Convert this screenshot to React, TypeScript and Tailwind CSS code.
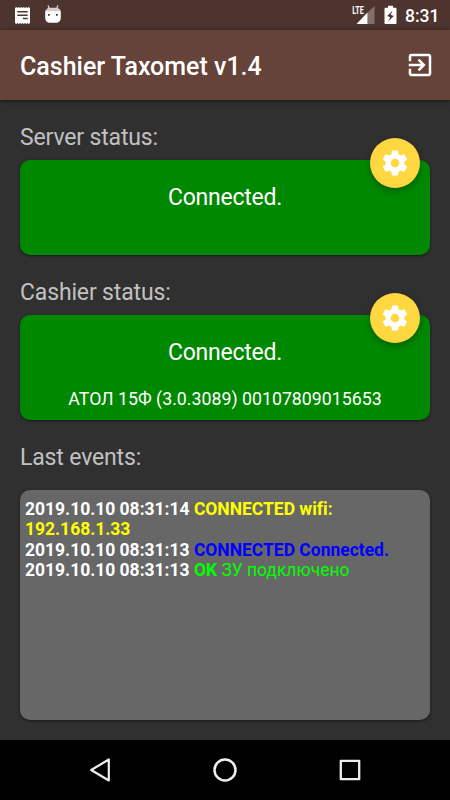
import React from "react";

function StatusBar() {
  return (
    <div className="flex h-[30px] shrink-0 items-center bg-[#4e342e] pl-[15px] pr-[10px]">
      <svg width="15" height="17" viewBox="0 0 15 17" fill="#fff">
        <path
          fillRule="evenodd"
          d="M0 1l1.25-1 1.25 1 1.25-1L5 1l1.25-1L7.5 1l1.25-1L10 1l1.25-1 1.25 1 1.25-1L15 1v15l-1.25 1-1.25-1-1.25 1L10 16l-1.25 1-1.25-1-1.25 1L5 16l-1.25 1-1.25-1-1.25 1L0 16zM2.3 4v1.5h10.4V4zM2.3 7.4v1.5h10.4V7.4zM7.8 10.7v1.5h4.9v-1.5z"
        />
      </svg>
      <svg className="ml-[14px]" width="18" height="20" viewBox="0 0.7 18 20">
        <path d="M4.2 1.5l1.2 3M13.8 1.5l-1.2 3" stroke="#e4dedd" strokeWidth="1.2" strokeLinecap="round" />
        <path d="M1.2 8C1.2 5.2 3.4 3.5 6 3.5h6c2.6 0 4.8 1.7 4.8 4.5z" fill="#d5cccb" />
        <path
          fillRule="evenodd"
          d="M1.2 7h15.6v6.7c0 3-2 4.7-4.8 4.7H6c-2.8 0-4.8-1.7-4.8-4.7zM4 9.6v1.8h1.8V9.6zM12 9.6v1.8h1.8V9.6z"
          fill="#fff"
        />
      </svg>
      <svg className="ml-auto" width="24" height="20" viewBox="0 0 24 20">
        <path d="M16.5 7.5L23.5 1v18h-7z" fill="#846f6b" />
        <path d="M16.5 7.5V19H5.5z" fill="#fff" />
        <text x="1.2" y="9" fill="#fff" fontFamily="Roboto, sans-serif" fontSize="10.5" fontWeight="700" textLength="11.6" lengthAdjust="spacingAndGlyphs">
          LTE
        </text>
      </svg>
      <svg className="ml-[9px]" width="13" height="20" viewBox="0 0 13 20">
        <path
          fillRule="evenodd"
          d="M4 .8h5v2h2.4c.6 0 1.1.5 1.1 1.1v14c0 .6-.5 1.1-1.1 1.1H1.6c-.6 0-1.1-.5-1.1-1.1v-14c0-.6.5-1.1 1.1-1.1H4zM8.6 5.6L3.2 11.1l3 1.1-2.1 4.3 5.8-5.6-3.2-1.2z"
          fill="#fff"
        />
      </svg>
      <span className="ml-[8px] w-[35px] whitespace-nowrap pt-[2px] text-[17.5px] font-medium leading-[20px] text-white">8:31</span>
    </div>
  );
}

function SettingsButton() {
  return (
    <button
      aria-label="Settings"
      className="absolute -top-[22px] right-[10px] flex size-[50px] items-center justify-center rounded-full bg-[#ffd740] shadow-[0_3px_7px_rgba(0,0,0,0.3)]"
    >
      <svg width="30" height="30" viewBox="0 0 24 24" fill="#fff">
        <path d="M19.43 12.98c.04-.32.07-.64.07-.98s-.03-.66-.07-.98l2.11-1.65c.19-.15.24-.42.12-.64l-2-3.46c-.12-.22-.39-.3-.61-.22l-2.49 1c-.52-.4-1.08-.73-1.69-.98l-.38-2.65C14.46 2.18 14.25 2 14 2h-4c-.25 0-.46.18-.49.42l-.38 2.65c-.61.25-1.17.59-1.69.98l-2.49-1c-.23-.09-.49 0-.61.22l-2 3.46c-.13.22-.07.49.12.64l2.11 1.65c-.04.32-.07.65-.07.98s.03.66.07.98l-2.11 1.65c-.19.15-.24.42-.12.64l2 3.46c.12.22.39.3.61.22l2.49-1c.52.4 1.08.73 1.69.98l.38 2.65c.03.24.24.42.49.42h4c.25 0 .46-.18.49-.42l.38-2.65c.61-.25 1.17-.59 1.69-.98l2.49 1c.23.09.49 0 .61-.22l2-3.46c.12-.22.07-.49-.12-.64l-2.11-1.65zM12 15.5c-1.93 0-3.5-1.57-3.5-3.5s1.57-3.5 3.5-3.5 3.5 1.57 3.5 3.5-1.57 3.5-3.5 3.5z" />
      </svg>
    </button>
  );
}

function Label({ children }: { children: React.ReactNode }) {
  return <h2 className="h-[30px] text-[23px] font-normal leading-[30px] tracking-[-0.15px] text-[#c1c1c1]">{children}</h2>;
}

export default function App() {
  return (
    <div className="flex h-[800px] w-[450px] flex-col overflow-hidden bg-[#303030] font-['Roboto',sans-serif]">
      <StatusBar />
      <header className="z-10 flex h-[70px] shrink-0 items-center justify-between bg-[#654339] pl-[20px] pr-[15px] shadow-[0_1px_4px_rgba(0,0,0,0.6)]">
        <h1 className="pt-[4px] text-[25px] font-medium leading-[30px] text-white">Cashier Taxomet v1.4</h1>
        <svg width="30" height="30" viewBox="0 0 24 24" fill="#fff">
          <path d="M10.09 15.59L11.5 17l5-5-5-5-1.41 1.41L12.67 11H3v2h9.67l-2.58 2.59zM19 3H5c-1.11 0-2 .9-2 2v4h2V5h14v14H5v-4H3v4c0 1.1.89 2 2 2h14c1.1 0 2-.9 2-2V5c0-1.1-.9-2-2-2z" />
        </svg>
      </header>

      <main className="flex flex-1 flex-col px-[20px] pt-[23px]">
        <Label>Server status:</Label>
        <section className="relative mt-[7px] h-[95px] rounded-[10px] bg-[#008800] pt-[23px] text-center text-white shadow-[0_1px_3px_rgba(0,0,0,0.5)]">
          <p className="text-[23px] leading-[30px] tracking-[-0.25px]">Connected.</p>
          <SettingsButton />
        </section>

        <div className="mt-[23px]">
          <Label>Cashier status:</Label>
        </div>
        <section className="relative mt-[7px] h-[105px] rounded-[10px] bg-[#008800] pt-[23px] text-center text-white shadow-[0_1px_3px_rgba(0,0,0,0.5)]">
          <p className="text-[23px] leading-[30px] tracking-[-0.25px]">Connected.</p>
          <p className="mt-[20px] text-[17.75px] leading-[22px]">АТОЛ 15Ф (3.0.3089) 00107809015653</p>
          <SettingsButton />
        </section>

        <div className="mt-[23px]">
          <Label>Last events:</Label>
        </div>
        <section className="mt-[17px] h-[230px] rounded-[10px] bg-[#676767] px-[5px] pt-[8.5px] text-[17.5px] font-bold leading-[20.6px] tracking-[-0.02px] text-white shadow-[0_1px_3px_rgba(0,0,0,0.5)]">
          <p>
            2019.10.10 08:31:14 <span className="text-[#ffff00]">CONNECTED wifi:<br />192.168.1.33</span>
          </p>
          <p>
            2019.10.10 08:31:13 <span className="text-[#0000ff]">CONNECTED Connected.</span>
          </p>
          <p>
            2019.10.10 08:31:13 <span className="text-[#00ff00]">OK <span className="font-normal">ЗУ подключено</span></span>
          </p>
        </section>
      </main>

      <nav className="flex h-[60px] shrink-0 items-center justify-between bg-black px-[85px]">
        <svg width="30" height="30" viewBox="0 0 30 30" fill="none" stroke="#eee" strokeWidth="2.2" strokeLinejoin="round">
          <path d="M23.8 4.5v21L6.2 15z" />
        </svg>
        <svg width="30" height="30" viewBox="0 0 30 30" fill="none" stroke="#eee" strokeWidth="2.5">
          <circle cx="15" cy="15" r="10.5" />
        </svg>
        <svg width="30" height="30" viewBox="0 0 30 30" fill="none" stroke="#eee" strokeWidth="2.3" strokeLinejoin="round">
          <rect x="5.8" y="5.8" width="18.4" height="18.4" />
        </svg>
      </nav>
    </div>
  );
}
